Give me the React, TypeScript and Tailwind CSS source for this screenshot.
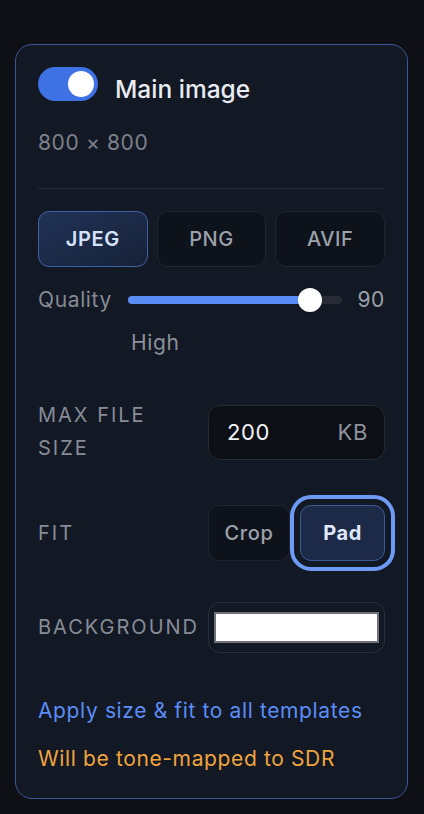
import React from "react";

const formats = ["JPEG", "PNG", "AVIF"];

const Toggle = () => (
	<div className="flex h-[34px] w-[60px] shrink-0 items-center justify-end rounded-full bg-[#3d71e4] pr-[4px]">
		<div className="h-[26px] w-[26px] rounded-full bg-white" />
	</div>
);

const FieldLabel = ({ children }: { children: React.ReactNode }) => (
	<div className="w-[170px] shrink-0 text-[20px] leading-[33px] tracking-[0.1em] text-[#878c96] uppercase">
		{children}
	</div>
);

export default function App() {
	return (
		<div
			className="min-h-screen bg-[#0e1015] pt-[44px] pb-[15px]"
			style={{ fontFamily: "Inter, 'Noto Sans', sans-serif" }}
		>
			<div className="ml-[15px] w-[393px] rounded-[17px] border-[1.5px] border-[#3a5898] bg-[#131825] px-[22px] pt-[22px] pb-[25px]">
				<div className="flex h-[34px] items-center gap-[17px]">
					<Toggle />
					<span className="mt-[10px] text-[24.5px] leading-[34px] font-medium text-[#e9ecf1]">
						Main image
					</span>
				</div>

				<p className="mt-[28px] text-[21px] leading-[28px] tracking-[0.03em] text-[#7c818a]">
					800 × 800
				</p>

				<div className="mt-[31px] h-px bg-[#262b36]" />

				<div className="mt-[22px] grid grid-cols-3 gap-[9px]">
					{formats.map((f) =>
						f === "JPEG" ? (
							<button
								key={f}
								className="h-[56px] rounded-[11px] border-[1.5px] border-[#3d60a2] bg-gradient-to-br from-[#213257] to-[#172238] text-[20px] font-semibold tracking-[0.03em] text-[#d7e3fc]"
							>
								{f}
							</button>
						) : (
							<button
								key={f}
								className="h-[56px] rounded-[11px] border-[1.5px] border-[#1f242e] bg-[#0e121a] text-[20px] font-medium tracking-[0.03em] text-[#9ca2ac]"
							>
								{f}
							</button>
						)
					)}
				</div>

				<div className="mt-[19px] flex h-[28px] items-center">
					<span className="w-[90px] shrink-0 text-[21px] tracking-[0.03em] text-[#858a93]">
						Quality
					</span>
					<div className="relative h-[8px] flex-1 rounded-full bg-[#262b36]">
						<div className="h-full w-[85%] rounded-full bg-[#5a8df5]" />
						<div className="absolute top-1/2 left-[85%] h-[24px] w-[24px] -translate-x-1/2 -translate-y-1/2 rounded-full bg-white shadow" />
					</div>
					<span className="ml-[15px] w-[28px] text-right text-[21px] tracking-[0.03em] text-[#9ba0a8]">
						90
					</span>
				</div>

				<p className="mt-[15px] ml-[93px] text-[21px] leading-[28px] tracking-[0.03em] text-[#8c919a]">
					High
				</p>

				<div className="mt-[42px] flex items-center">
					<FieldLabel>
						Max file
						<br />
						size
					</FieldLabel>
					<div className="flex h-[55px] flex-1 items-center justify-between rounded-[12px] border-[1.5px] border-[#252a35] bg-[#0c0f15] pr-[16px] pl-[18px]">
						<span className="text-[22px] tracking-[0.03em] text-[#f1f3f6]">200</span>
						<span className="text-[22px] tracking-[0.03em] text-[#8e939c]">KB</span>
					</div>
				</div>

				<div className="mt-[40px] flex items-center">
					<FieldLabel>Fit</FieldLabel>
					<div className="flex flex-1 gap-[10px]">
						<button className="h-[56px] w-[82px] rounded-[11px] border-[1.5px] border-[#1f242e] bg-[#0e121a] text-[20px] font-medium tracking-[0.03em] text-[#9ca2ac]">
							Crop
						</button>
						<button className="h-[56px] flex-1 rounded-[11px] border-[1.5px] border-[#3a5a98] bg-[#1c2a48] text-[20px] font-bold tracking-[0.03em] text-[#dfe7f8] outline-[4px] outline-offset-[6px] outline-[#6d9af5] outline-solid">
							Pad
						</button>
					</div>
				</div>

				<div className="mt-[41px] flex items-center">
					<FieldLabel>Background</FieldLabel>
					<div className="flex h-[51px] flex-1 items-center rounded-[12px] border-[1.5px] border-[#2a2f3b] px-[5px]">
						<div className="h-[31px] w-full border-2 border-[#6e7278] bg-white" />
					</div>
				</div>

				<p className="mt-[44px] text-[21px] leading-[28px] tracking-[0.03em] text-[#5a8df5]">
					Apply size &amp; fit to all templates
				</p>
				<p className="mt-[20px] text-[21px] leading-[28px] tracking-[0.03em] text-[#f0a43d]">
					Will be tone-mapped to SDR
				</p>
			</div>
		</div>
	);
}
